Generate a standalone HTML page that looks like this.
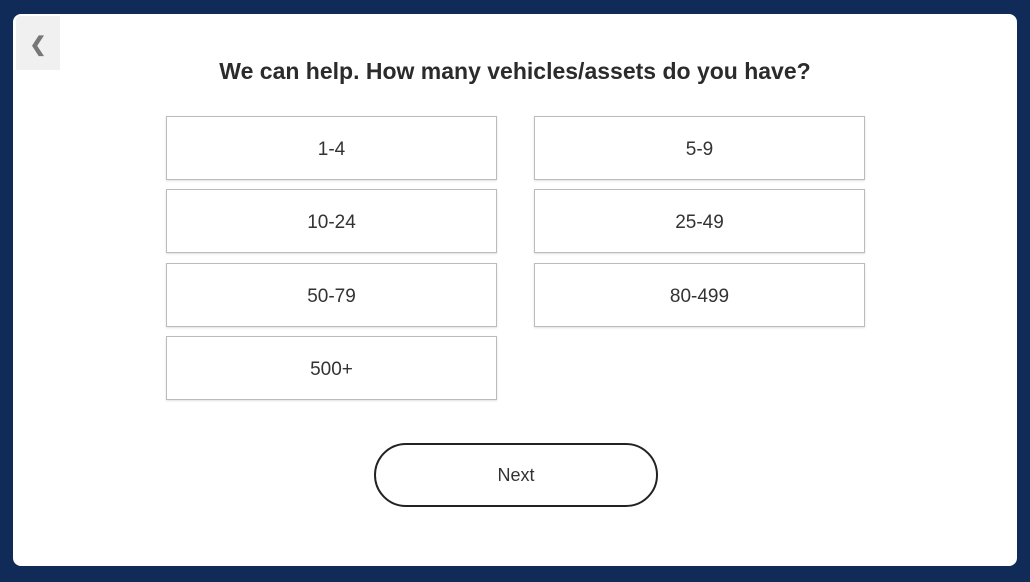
<!DOCTYPE html>
<html><head><style>
body{margin:0;width:1030px;height:582px;background:#102b57;font-family:"Liberation Sans",sans-serif;position:relative;overflow:hidden}
.card{position:absolute;left:13px;top:14px;width:1004px;height:552px;background:#fff;border-radius:8px}
.back{position:absolute;left:3px;top:2px;width:44px;height:54px;background:#f0f0f0;border-radius:4px 0 0 0;color:#777;font-size:20px;font-weight:bold;text-align:center;line-height:58px}
h1{position:absolute;left:0;right:0;top:44px;margin:0;text-align:center;font-size:23px;font-weight:bold;color:#2b2b2b}
.b{position:absolute;width:329px;height:62px;border:1px solid #bbb;box-shadow:0 1px 2px rgba(0,0,0,.12);text-align:center;line-height:66px;font-size:19px;color:#333;background:#fff}
.n{position:absolute;left:361px;top:429px;width:280px;height:60px;border:2px solid #222;border-radius:32px;text-align:center;line-height:60px;font-size:18px;color:#333}
</style></head><body>
<div class="card">
<div class="back">❮</div>
<h1>We can help. How many vehicles/assets do you have?</h1>
<div class="b" style="left:153px;top:102px">1-4</div>
<div class="b" style="left:521px;top:102px">5-9</div>
<div class="b" style="left:153px;top:175px">10-24</div>
<div class="b" style="left:521px;top:175px">25-49</div>
<div class="b" style="left:153px;top:249px">50-79</div>
<div class="b" style="left:521px;top:249px">80-499</div>
<div class="b" style="left:153px;top:322px">500+</div>
<div class="n">Next</div>
</div>
</body></html>
